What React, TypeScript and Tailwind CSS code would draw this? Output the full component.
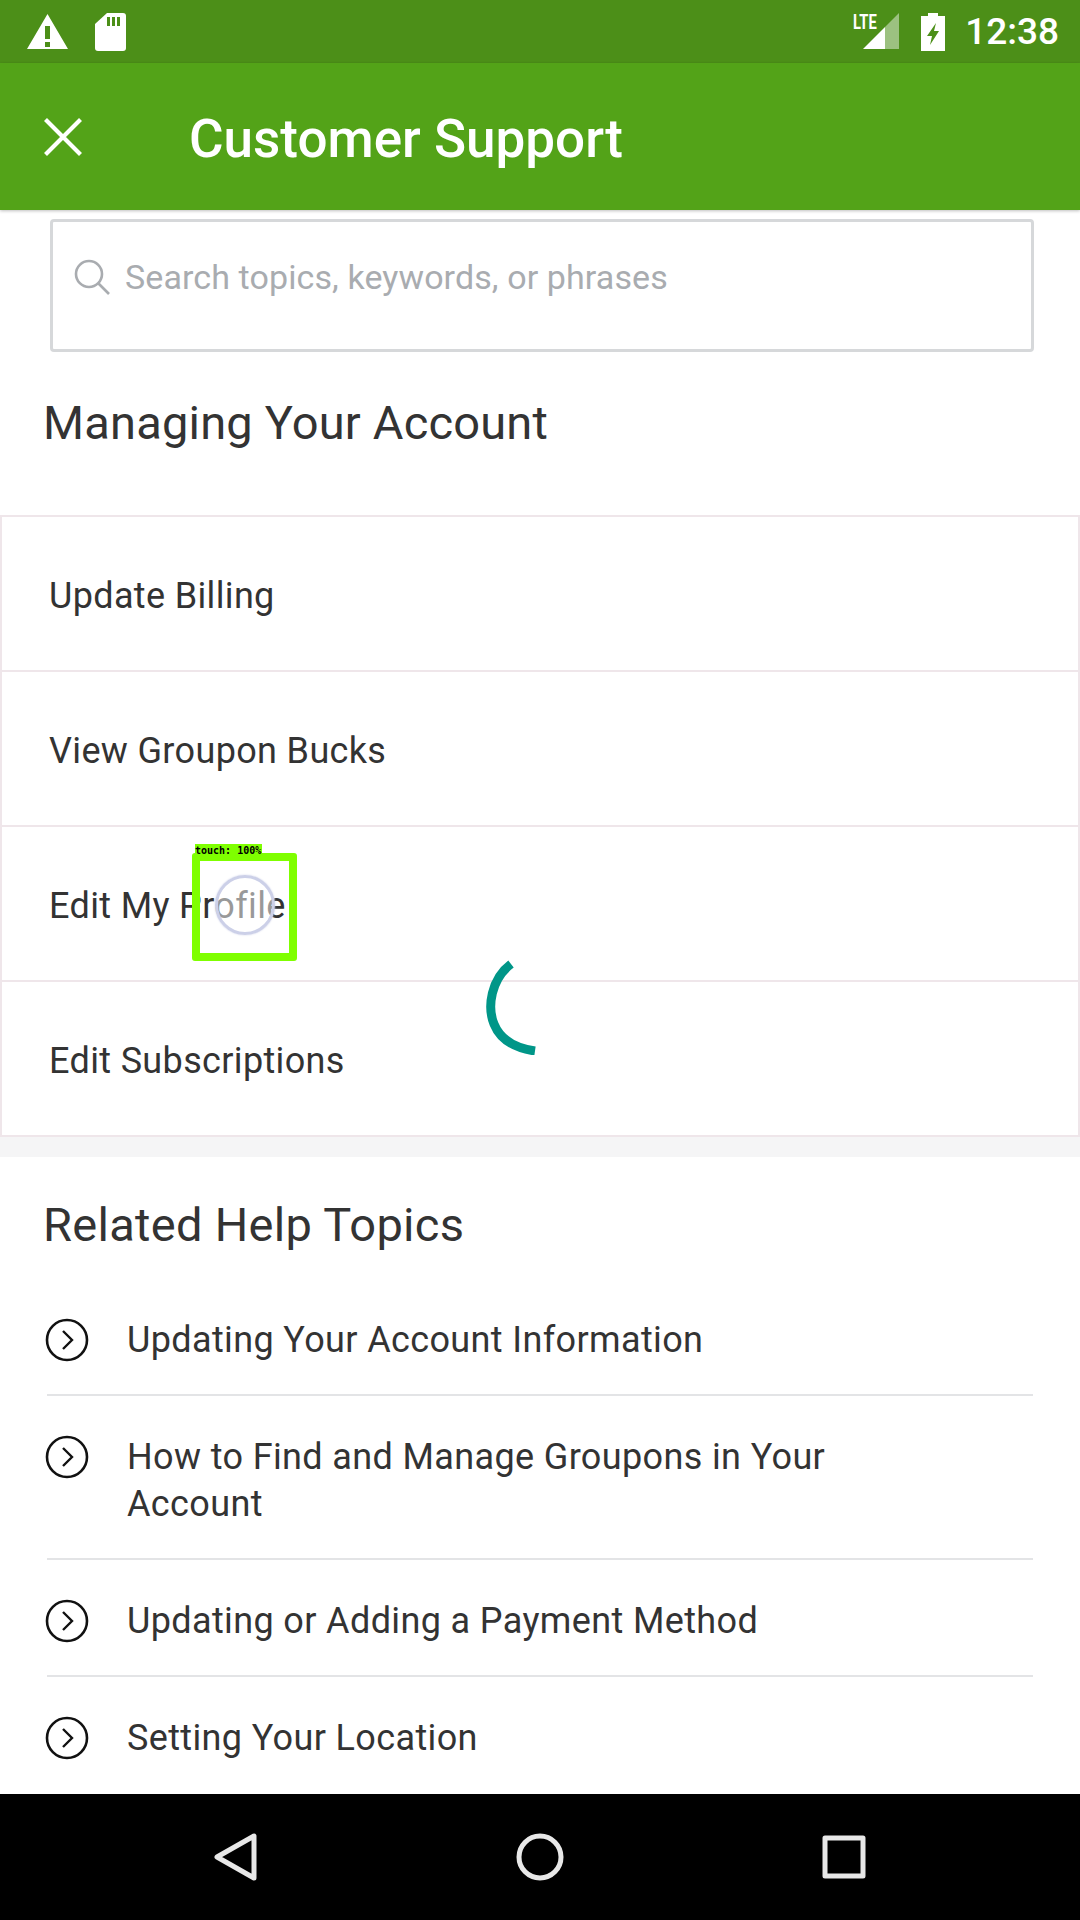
const accountLinks = ["Update Billing", "View Groupon Bucks", "Edit My Profile", "Edit Subscriptions"];

const helpTopics = [
  "Updating Your Account Information",
  "How to Find and Manage Groupons in Your Account",
  "Updating or Adding a Payment Method",
  "Setting Your Location",
];

function CircleChevron() {
  return (
    <svg className="-ml-[2px] mt-[1px] h-[44px] w-[44px] shrink-0" viewBox="0 0 44 44" fill="none" stroke="#111" strokeWidth="2.6">
      <circle cx="22" cy="22" r="20" />
      <path d="M18 13l9 9-9 9" strokeWidth="2.4" />
    </svg>
  );
}

function StatusBar() {
  return (
    <div className="flex h-[63px] items-center justify-between bg-[#4c8f18] pl-[27px] pr-[21px] text-white">
      <div className="flex items-center gap-[27px]">
        <svg className="h-[38px] w-[41px]" viewBox="0 0 41 38" fill="#fff">
          <path fillRule="evenodd" d="M20.5 1L41 36H0L20.5 1zM18 13v13h5V13h-5zm0 16v5h5v-5h-5z" />
        </svg>
        <svg className="h-[38px] w-[31px]" viewBox="0 0 31 38">
          <path fill="#fff" d="M12 0h16a3 3 0 0 1 3 3v32a3 3 0 0 1-3 3H3a3 3 0 0 1-3-3V11L12 0z" />
          <path fill="#4c8f18" d="M12 4h3v9h-3zM17 4h3v9h-3zM22 4h3v9h-3z" />
        </svg>
      </div>
      <div className="flex items-center">
        <div className="relative h-[38px] w-[45px]">
          <svg className="absolute left-0 top-0 h-[38px] w-[45px]" viewBox="0 0 45 38">
            <path fill="#fff" d="M9 36L31 14v22z" />
            <path fill="#fff" fillOpacity="0.45" d="M31 14L45 0v36H31z" />
          </svg>
          <span className="absolute left-[-1px] top-[-1px] origin-left scale-x-[0.7] font-['Roboto',sans-serif] text-[21px] font-bold leading-[21px]">LTE</span>
        </div>
        <svg className="ml-[22px] h-[38px] w-[24px]" viewBox="0 0 24 38">
          <path fill="#fff" d="M7 0h10v3h7v35H0V3h7z" />
          <path fill="#4c8f18" d="M15 10L6 23h5l-2 9 9-14h-5l2-8z" />
        </svg>
        <span className="ml-[20px] font-['Roboto',sans-serif] text-[37px] font-medium leading-none">12:38</span>
      </div>
    </div>
  );
}

function NavBar() {
  return (
    <div className="relative z-10 flex h-[126px] shrink-0 items-center bg-black pl-[214px] pr-[214px]">
      <div className="flex w-full items-center justify-between">
        <svg className="h-[48px] w-[44px]" viewBox="0 0 44 48" fill="none" stroke="#e8e8e8" strokeWidth="5" strokeLinejoin="round">
          <path d="M40 3v42L3 24z" />
        </svg>
        <svg className="h-[48px] w-[48px]" viewBox="0 0 48 48" fill="none" stroke="#e8e8e8" strokeWidth="5">
          <circle cx="24" cy="24" r="21" />
        </svg>
        <svg className="h-[44px] w-[44px]" viewBox="0 0 44 44" fill="none" stroke="#e8e8e8" strokeWidth="5" strokeLinejoin="round">
          <rect x="3" y="3" width="38" height="38" />
        </svg>
      </div>
    </div>
  );
}

export default function App() {
  return (
    <div className="relative flex h-[1920px] w-[1080px] flex-col overflow-hidden bg-white font-['Roboto',sans-serif] text-[#333]">
      <StatusBar />

      <header className="z-10 flex h-[147px] shrink-0 items-center bg-[#53a318] pl-[44px] shadow-[0_1px_3px_rgba(0,0,0,0.25)]">
        <svg className="h-[38px] w-[38px]" viewBox="0 0 38 38" fill="none" stroke="#fff" strokeWidth="4.2">
          <path d="M1.5 1.5l35 35M36.5 1.5l-35 35" />
        </svg>
        <h1 className="ml-[107px] pt-[6px] text-[53px] font-medium leading-none text-white">Customer Support</h1>
      </header>

      <main className="flex min-h-0 flex-1 flex-col overflow-hidden">
        <div className="ml-[50px] mr-[46px] mt-[9px] h-[133px] shrink-0 rounded-[4px] border-[3px] border-[#d6d8da] pl-[20px] pt-[36px]">
          <div className="flex items-center">
            <svg className="h-[38px] w-[38px]" viewBox="0 0 38 38" fill="none" stroke="#a9acb0" strokeWidth="2.6">
              <circle cx="16" cy="16" r="13" />
              <path d="M25.5 25.5L36 36" />
            </svg>
            <span className="ml-[14px] text-[34px] leading-none tracking-[0.1px] text-[#a9acb0]">Search topics, keywords, or phrases</span>
          </div>
        </div>

        <h2 className="ml-[43px] mt-[45px] text-[47px] leading-[52px] tracking-[0.2px]">Managing Your Account</h2>

        <ul className="mt-[66px] border-t-2 border-[#efe6ea]">
          {accountLinks.map((link) => (
            <li key={link} className="flex h-[155px] items-center border-x-2 border-b-2 border-[#efe6ea] pl-[47px] pt-[5px] text-[36px] tracking-[0.35px]">
              {link}
            </li>
          ))}
        </ul>

        <div className="h-[20px] shrink-0 bg-[#f5f5f6]" />

        <h2 className="ml-[43px] mt-[42px] text-[47px] leading-[52px] tracking-[0.3px]">Related Help Topics</h2>

        <ul className="mx-[47px] mt-[28px]">
          {helpTopics.map((topic, i) => (
            <li key={topic} className={`flex gap-[38px] pb-[30px] pt-[38px] ${i < helpTopics.length - 1 ? "border-b-2 border-[#e3e4e6]" : ""}`}>
              <CircleChevron />
              <span className="max-w-[740px] text-[36px] leading-[47px] tracking-[0.37px]">{topic}</span>
            </li>
          ))}
        </ul>
      </main>

      <NavBar />

      {/* touch overlay */}
      <div className="absolute left-[192px] top-[853px] h-[108px] w-[105px] rounded-[3px] border-[8px] border-[#7fff00]">
        <div className="absolute left-[15px] top-[14px] h-[60px] w-[60px] rounded-full border-[3px] border-[#ccd0e8] bg-white/50 shadow-[0_0_2px_#ccd0e8]" />
      </div>
      <div className="absolute left-[195px] top-[844px] h-[13px] w-[67px] bg-[#7fff00] font-['DejaVu_Sans_Mono',monospace] text-[10px] font-bold leading-[13px] text-black">
        touch: 100%
      </div>

      {/* loading spinner */}
      <svg className="absolute left-[484px] top-[959px] h-[96px] w-[56px]" viewBox="0 0 56 96" fill="none" stroke="#009688" strokeWidth="9">
        <path d="M27 5C7 20 3 48 10 65c6 15 20 24 41 27" />
      </svg>
    </div>
  );
}
